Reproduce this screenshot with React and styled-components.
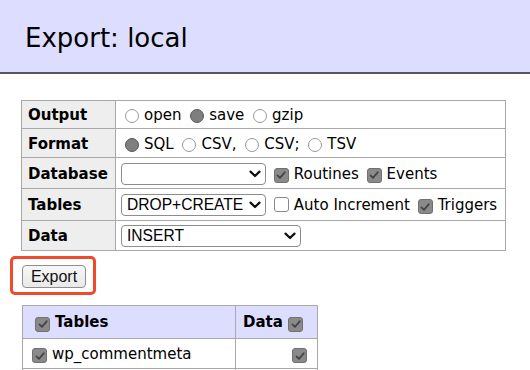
import React from 'react'
import styled, { createGlobalStyle } from 'styled-components'

const GlobalStyle = createGlobalStyle`
  html, body {
    margin: 0;
    padding: 0;
    background: #fff;
  }
  body {
    font-family: "DejaVu Sans", Verdana, sans-serif;
    font-size: 15px;
    color: #000;
  }
`

const Header = styled.h2`
  margin: 0;
  height: 74px;
  box-sizing: border-box;
  padding: 3px 0 0 25px;
  display: flex;
  align-items: center;
  background: #ddf;
  border-bottom: 2px solid #56565e;
  font-size: 26px;
  font-weight: normal;
  line-height: 32px;
`

const Main = styled.div`
  padding-top: 26px;
`

const OptionsTable = styled.table`
  margin-left: 21px;
  width: 485px;
  border-collapse: collapse;
  border: 1px solid #a8a8a8;
`

const Row = styled.tr`
  height: ${props => props.$h}px;
`

const Label = styled.th`
  width: 81px;
  padding: 1px 6px 0;
  background: #eee;
  border: 1px solid #a8a8a8;
  text-align: left;
  font-weight: bold;
  white-space: nowrap;
  vertical-align: middle;
`

const Cell = styled.td`
  padding: 1px 5px 0;
  border: 1px solid #a8a8a8;
  white-space: nowrap;
  vertical-align: middle;
  text-align: ${props => props.$align || 'left'};
`

const Radio = styled.span`
  display: inline-block;
  box-sizing: border-box;
  width: 14px;
  height: 14px;
  margin: 0 5px 0 4px;
  border-radius: 50%;
  vertical-align: -3px;
  border: ${props => props.$on ? '1.5px solid #575757' : '1px solid #9a9a9a'};
  background: ${props => props.$on ? '#7f7f7f' : '#fff'};
`

const Box = styled.span`
  display: inline-flex;
  align-items: center;
  justify-content: center;
  box-sizing: border-box;
  width: 15px;
  height: 15px;
  margin: 0 5px 0 ${props => props.$ml ?? 3}px;
  border-radius: 3px;
  vertical-align: -2px;
  border: 1px solid ${props => props.$on ? '#707070' : '#8a8a8a'};
  background: ${props => props.$on ? '#8a8a8a' : '#fff'};
`

const Select = styled.span`
  display: inline-flex;
  align-items: center;
  justify-content: space-between;
  box-sizing: border-box;
  width: ${props => props.$w}px;
  height: 22px;
  padding: 0 4px 0 5px;
  border: 1px solid #8d8d8d;
  border-radius: 4px;
  background: #fff;
  font-family: "Liberation Sans", Arial, sans-serif;
  font-size: 15.6px;
  vertical-align: middle;
`

const ButtonFrame = styled.div`
  display: inline-block;
  margin: 5px 0 0 10px;
  padding: 6px 7px 4px 9px;
  border: 3px solid #ef4a2c;
  border-radius: 5px;
`

const Button = styled.button`
  display: block;
  width: 64px;
  height: 23px;
  padding: 0;
  border: 1px solid #8f8f8f;
  border-radius: 4px;
  background: linear-gradient(#f7f7f7, #e9e9e9);
  font-family: "Liberation Sans", Arial, sans-serif;
  font-size: 16px;
  color: #111;
`

const TablesList = styled.table`
  margin: 10px 0 0 22px;
  width: 296px;
  border-collapse: collapse;
  border: 1px solid #a8a8a8;
`

const HeadCell = styled.th`
  width: ${props => props.$w ? `${props.$w}px` : 'auto'};
  height: 31px;
  padding: 1px 7px 0 ${props => props.$pl || 7}px;
  background: #ddf;
  border: 1px solid #a8a8a8;
  text-align: left;
  font-weight: bold;
  white-space: nowrap;
  vertical-align: middle;
`

const ListRow = styled.tr`
  height: 30px;
`

function Check({ on, ml }) {
  return (
    <Box $on={on} $ml={ml}>
      {on && (
        <svg width="10" height="10" viewBox="0 0 10 10">
          <path d="M1.5 5.4 L4 7.8 L8.7 2.3" fill="none" stroke="#454545" strokeWidth="1.8" strokeLinecap="round" strokeLinejoin="round" />
        </svg>
      )}
    </Box>
  )
}

function Dropdown({ width, children }) {
  return (
    <Select $w={width}>
      <span>{children}</span>
      <svg width="12" height="8" viewBox="0 0 12 8">
        <path d="M1.5 1.6 L6 6 L10.5 1.6" fill="none" stroke="#111" strokeWidth="2.2" strokeLinecap="round" strokeLinejoin="round" />
      </svg>
    </Select>
  )
}

const tables = ['wp_commentmeta', 'wp_comments']

export default function App() {
  return (
    <>
      <GlobalStyle />
      <Header>Export: local</Header>
      <Main>
        <OptionsTable>
          <tbody>
            <Row $h={28}>
              <Label>Output</Label>
              <Cell>
                <Radio />open <Radio $on />save <Radio />gzip
              </Cell>
            </Row>
            <Row $h={29}>
              <Label>Format</Label>
              <Cell>
                <Radio $on />SQL <Radio />CSV, <Radio />CSV; <Radio />TSV
              </Cell>
            </Row>
            <Row $h={31}>
              <Label>Database</Label>
              <Cell>
                <Dropdown width={145}></Dropdown> <Check on />Routines <Check on />Events
              </Cell>
            </Row>
            <Row $h={32}>
              <Label>Tables</Label>
              <Cell>
                <Dropdown width={145}>DROP+CREATE</Dropdown> <Check />Auto Increment <Check on />Triggers
              </Cell>
            </Row>
            <Row $h={30}>
              <Label>Data</Label>
              <Cell>
                <Dropdown width={180}>INSERT</Dropdown>
              </Cell>
            </Row>
          </tbody>
        </OptionsTable>

        <ButtonFrame>
          <Button>Export</Button>
        </ButtonFrame>

        <TablesList>
          <thead>
            <tr>
              <HeadCell $pl={9} $w={196}><Check on />Tables</HeadCell>
              <HeadCell>Data <Check on ml={0} /></HeadCell>
            </tr>
          </thead>
          <tbody>
            {tables.map(name => (
              <ListRow key={name}>
                <Cell><Check on ml={4} />{name}</Cell>
                <Cell $align="right"><Check on ml={0} /></Cell>
              </ListRow>
            ))}
          </tbody>
        </TablesList>
      </Main>
    </>
  )
}
